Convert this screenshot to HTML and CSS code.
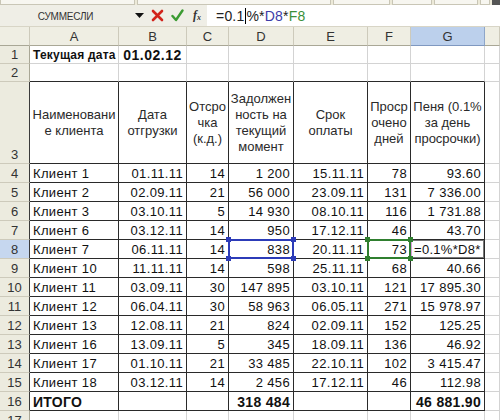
FILE: index.html
```html
<!DOCTYPE html>
<html lang="ru">
<head>
<meta charset="utf-8">
<title>Excel</title>
<link rel="stylesheet" href="styles.css">
</head>
<body>
<div class="app">
  <div class="toolbar">
    <div class="tb-box tb-wide"></div>
    <div class="tb-box tb-mid"></div>
    <div class="tb-box tb-s1"></div>
    <div class="tb-box tb-s2"></div>
    <div class="tb-box tb-s3"></div>
    <div class="tb-box tb-s4"></div>
    <div class="tb-dark"></div>
  </div>
  <div class="fbar">
    <div class="namebox">СУММЕСЛИ</div>
    <div class="fbtns">
      <span class="drop">
        <svg width="9" height="5" viewBox="0 0 9 5"><path d="M0 0h9L4.5 5z" fill="#111"/></svg>
      </span>
      <span class="ico">
        <svg width="13" height="13" viewBox="0 0 13 13"><path d="M2 2l9 9M11 2l-9 9" stroke="#d2241c" stroke-width="2.6" stroke-linecap="round"/></svg>
      </span>
      <span class="ico">
        <svg width="13" height="13" viewBox="0 0 13 13"><path d="M1.5 7l3.5 4L11.5 1.5" fill="none" stroke="#3b9b32" stroke-width="2.4" stroke-linecap="round" stroke-linejoin="round"/></svg>
      </span>
      <span class="fx">f<sub>x</sub></span>
    </div>
    <div class="finput"><span>=0.1</span><span class="caret"></span><span>%*</span><span class="refd">D8</span><span>*</span><span class="reff">F8</span></div>
  </div>

  <div class="sheet">
    <div class="ch corner"></div>
    <div class="ch">A</div><div class="ch">B</div><div class="ch">C</div><div class="ch">D</div><div class="ch">E</div><div class="ch">F</div><div class="ch sel">G</div><div class="ch"></div>

    <div class="rh">1</div>
    <div class="c b small">Текущая дата</div><div class="c b ctr big">01.02.12</div><div class="c"></div><div class="c"></div><div class="c"></div><div class="c"></div><div class="c"></div><div class="c"></div>

    <div class="rh">2</div>
    <div class="c tp"></div><div class="c tp"></div><div class="c tp"></div><div class="c tp"></div><div class="c tp"></div><div class="c tp"></div><div class="c tp"></div><div class="c"></div>

    <div class="rh edge bottom">3</div>
    <div class="c t hdr">Наименовани<br>е клиента</div>
    <div class="c t hdr">Дата<br>отгрузки</div>
    <div class="c t hdr">Отсро<br>чка<br>(к.д.)</div>
    <div class="c t hdr">Задолжен<br>ность на<br>текущий<br>момент</div>
    <div class="c t hdr">Срок<br>оплаты</div>
    <div class="c t hdr">Проср<br>очено<br>дней</div>
    <div class="c t hdr">Пеня (0.1%<br>за день<br>просрочки)</div>
    <div class="c"></div>

    <div class="rh edge">4</div>
    <div class="c t">Клиент 1</div><div class="c t r">01.11.11</div><div class="c t r">14</div><div class="c t r">1 200</div><div class="c t r">15.11.11</div><div class="c t r">78</div><div class="c t r">93.60</div><div class="c"></div>

    <div class="rh edge">5</div>
    <div class="c t">Клиент 2</div><div class="c t r">02.09.11</div><div class="c t r">21</div><div class="c t r">56 000</div><div class="c t r">23.09.11</div><div class="c t r">131</div><div class="c t r">7 336.00</div><div class="c"></div>

    <div class="rh edge">6</div>
    <div class="c t">Клиент 3</div><div class="c t r">03.10.11</div><div class="c t r">5</div><div class="c t r">14 930</div><div class="c t r">08.10.11</div><div class="c t r">116</div><div class="c t r">1 731.88</div><div class="c"></div>

    <div class="rh edge">7</div>
    <div class="c t">Клиент 6</div><div class="c t r">03.12.11</div><div class="c t r">14</div><div class="c t r">950</div><div class="c t r">17.12.11</div><div class="c t r">46</div><div class="c t r">43.70</div><div class="c"></div>

    <div class="rh edge sel">8</div>
    <div class="c t">Клиент 7</div><div class="c t r">06.11.11</div><div class="c t r">14</div>
    <div class="c t r refbox blue">838<i class="h tl"></i><i class="h tr"></i><i class="h bl"></i><i class="h br"></i></div>
    <div class="c t r">20.11.11</div>
    <div class="c t r refbox green">73<i class="h tl"></i><i class="h tr"></i><i class="h bl"></i><i class="h br"></i></div>
    <div class="c t edit">=0.1%*D8*</div>
    <div class="c"></div>

    <div class="rh edge">9</div>
    <div class="c t">Клиент 10</div><div class="c t r">11.11.11</div><div class="c t r">14</div><div class="c t r">598</div><div class="c t r">25.11.11</div><div class="c t r">68</div><div class="c t r">40.66</div><div class="c"></div>

    <div class="rh edge">10</div>
    <div class="c t">Клиент 11</div><div class="c t r">03.09.11</div><div class="c t r">30</div><div class="c t r">147 895</div><div class="c t r">03.10.11</div><div class="c t r">121</div><div class="c t r">17 895.30</div><div class="c"></div>

    <div class="rh edge">11</div>
    <div class="c t">Клиент 12</div><div class="c t r">06.04.11</div><div class="c t r">30</div><div class="c t r">58 963</div><div class="c t r">06.05.11</div><div class="c t r">271</div><div class="c t r">15 978.97</div><div class="c"></div>

    <div class="rh edge">12</div>
    <div class="c t">Клиент 13</div><div class="c t r">12.08.11</div><div class="c t r">21</div><div class="c t r">824</div><div class="c t r">02.09.11</div><div class="c t r">152</div><div class="c t r">125.25</div><div class="c"></div>

    <div class="rh edge">13</div>
    <div class="c t">Клиент 16</div><div class="c t r">13.09.11</div><div class="c t r">5</div><div class="c t r">345</div><div class="c t r">18.09.11</div><div class="c t r">136</div><div class="c t r">46.92</div><div class="c"></div>

    <div class="rh edge">14</div>
    <div class="c t">Клиент 17</div><div class="c t r">01.10.11</div><div class="c t r">21</div><div class="c t r">33 485</div><div class="c t r">22.10.11</div><div class="c t r">102</div><div class="c t r">3 415.47</div><div class="c"></div>

    <div class="rh edge">15</div>
    <div class="c t">Клиент 18</div><div class="c t r">03.12.11</div><div class="c t r">14</div><div class="c t r">2 456</div><div class="c t r">17.12.11</div><div class="c t r">46</div><div class="c t r">112.98</div><div class="c"></div>

    <div class="rh edge">16</div>
    <div class="c t b total">ИТОГО</div><div class="c t"></div><div class="c t"></div><div class="c t r b total">318 484</div><div class="c t"></div><div class="c t"></div><div class="c t r b total">46 881.90</div><div class="c"></div>

    <div class="rh">17</div>
    <div class="c"></div><div class="c"></div><div class="c"></div><div class="c"></div><div class="c"></div><div class="c"></div><div class="c"></div><div class="c"></div>
  </div>
</div>
</body>
</html>
```

FILE: styles.css
```css
* { box-sizing: border-box; }
html, body { margin: 0; padding: 0; background: #fff; }
body { width: 500px; height: 420px; overflow: hidden; font-family: "Liberation Sans", Arial, sans-serif; color: #111; }

.app { width: 500px; height: 420px; overflow: hidden; }

.toolbar {
  height: 5px; background: #ece9d8; display: flex; gap: 2px; align-items: stretch;
}
.tb-box { background: #f7f6f0; border: 1px solid #c9c6b6; border-top: none; }
.tb-wide { width: 136px; }
.tb-mid { width: 194px; }
.tb-s1 { width: 58px; }
.tb-s2 { width: 40px; }
.tb-s3 { width: 44px; }
.tb-s4 { width: 10px; }
.tb-dark { width: 8px; background: #555; }

.fbar { height: 22px; display: flex; background: #efeee6; border-bottom: 1px solid #d8d5c6; }
.namebox {
  width: 131px; display: flex; align-items: center; justify-content: center;
  font-size: 10px; color: #333; letter-spacing: -0.2px; padding-top: 1px;
}
.fbtns { width: 76px; display: flex; align-items: center; padding-left: 4px; gap: 7px; }
.drop { width: 9px; display: flex; }
.ico { display: flex; }
.fx { font-family: "Liberation Serif", serif; font-style: italic; font-weight: bold; font-size: 12px; color: #333; margin-left: 2px; }
.fx sub { font-size: 8px; vertical-align: -1px; }
.finput {
  flex: 1; background: #fff; display: flex; align-items: center; padding-left: 9px;
  font-size: 14px; color: #222; letter-spacing: 0.2px;
}
.caret { width: 1px; height: 16px; background: #000; margin: 0 0 0 1px; }
.refd { color: #3c3ca8; }
.reff { color: #3a8f3a; }

.sheet {
  display: grid;
  grid-template-columns: 30px 89px 68px 42px 65px 74px 43px 74px 1fr;
  grid-template-rows: 19px 18px 18px 82px repeat(13, 19px) 19px;
  font-size: 13px;
}

.ch {
  background: #efeee3; border-right: 1px solid #cdcabb; border-bottom: 1px solid #a9a796;
  display: flex; align-items: center; justify-content: center; color: #333; font-size: 13px;
}
.ch.sel { background: #bcd0ec; border-right-color: #8ea6c9; border-bottom-color: #7f98c0; }
.corner { background: #efeee3; }

.rh {
  background: #ecebdf; border-right: 1px solid #a9a796; border-bottom: 1px solid #cdcabb;
  display: flex; align-items: center; justify-content: center; color: #333; font-size: 13px;
}
.rh.edge { border-right-color: #3a3a3a; }
.rh.bottom { align-items: flex-end; padding-bottom: 1px; }
.rh.sel { background: #c6d7ef; }

.c {
  border-right: 1px solid #d3d3d3; border-bottom: 1px solid #d3d3d3;
  display: flex; align-items: center; padding: 1px 3px 0; white-space: nowrap; overflow: hidden;
  letter-spacing: 0.35px;
}
.c.tp { border-bottom-color: #2a2a2a; }
.c.t { border-right-color: #2a2a2a; border-bottom-color: #2a2a2a; }
.c.r { justify-content: flex-end; }
.c.b { font-weight: bold; letter-spacing: 0.1px; }
.c.small { font-size: 12px; letter-spacing: 0.2px; }
.c.total { font-size: 14px; letter-spacing: 0.3px; }
.c.ctr { justify-content: center; }
.c.big { font-size: 14px; letter-spacing: 0.5px; }
.c.hdr {
  justify-content: center; text-align: center; line-height: 16px; white-space: nowrap;
  padding: 0; color: #2a2a2a; letter-spacing: 0;
}

.refbox { position: relative; overflow: visible; }
.refbox::before {
  content: ""; position: absolute; left: -1px; top: -1px; right: -1px; bottom: -1px;
  border: 2px solid #2c3bb8;
}
.refbox.green::before { border-color: #2f7f2f; }
.h { position: absolute; width: 5px; height: 5px; background: #2c3bb8; z-index: 2; }
.green .h { background: #2f7f2f; }
.h.tl { left: -3px; top: -3px; }
.h.tr { right: -3px; top: -3px; }
.h.bl { left: -3px; bottom: -3px; }
.h.br { right: -3px; bottom: -3px; }

.edit {
  position: relative; padding-left: 3px; letter-spacing: 0.3px;
  box-shadow: inset 1px 0 0 #d9a0d9, inset 0 1px 0 #777, inset 0 -1px 0 #777, inset -1px 0 0 #777;
}
```
